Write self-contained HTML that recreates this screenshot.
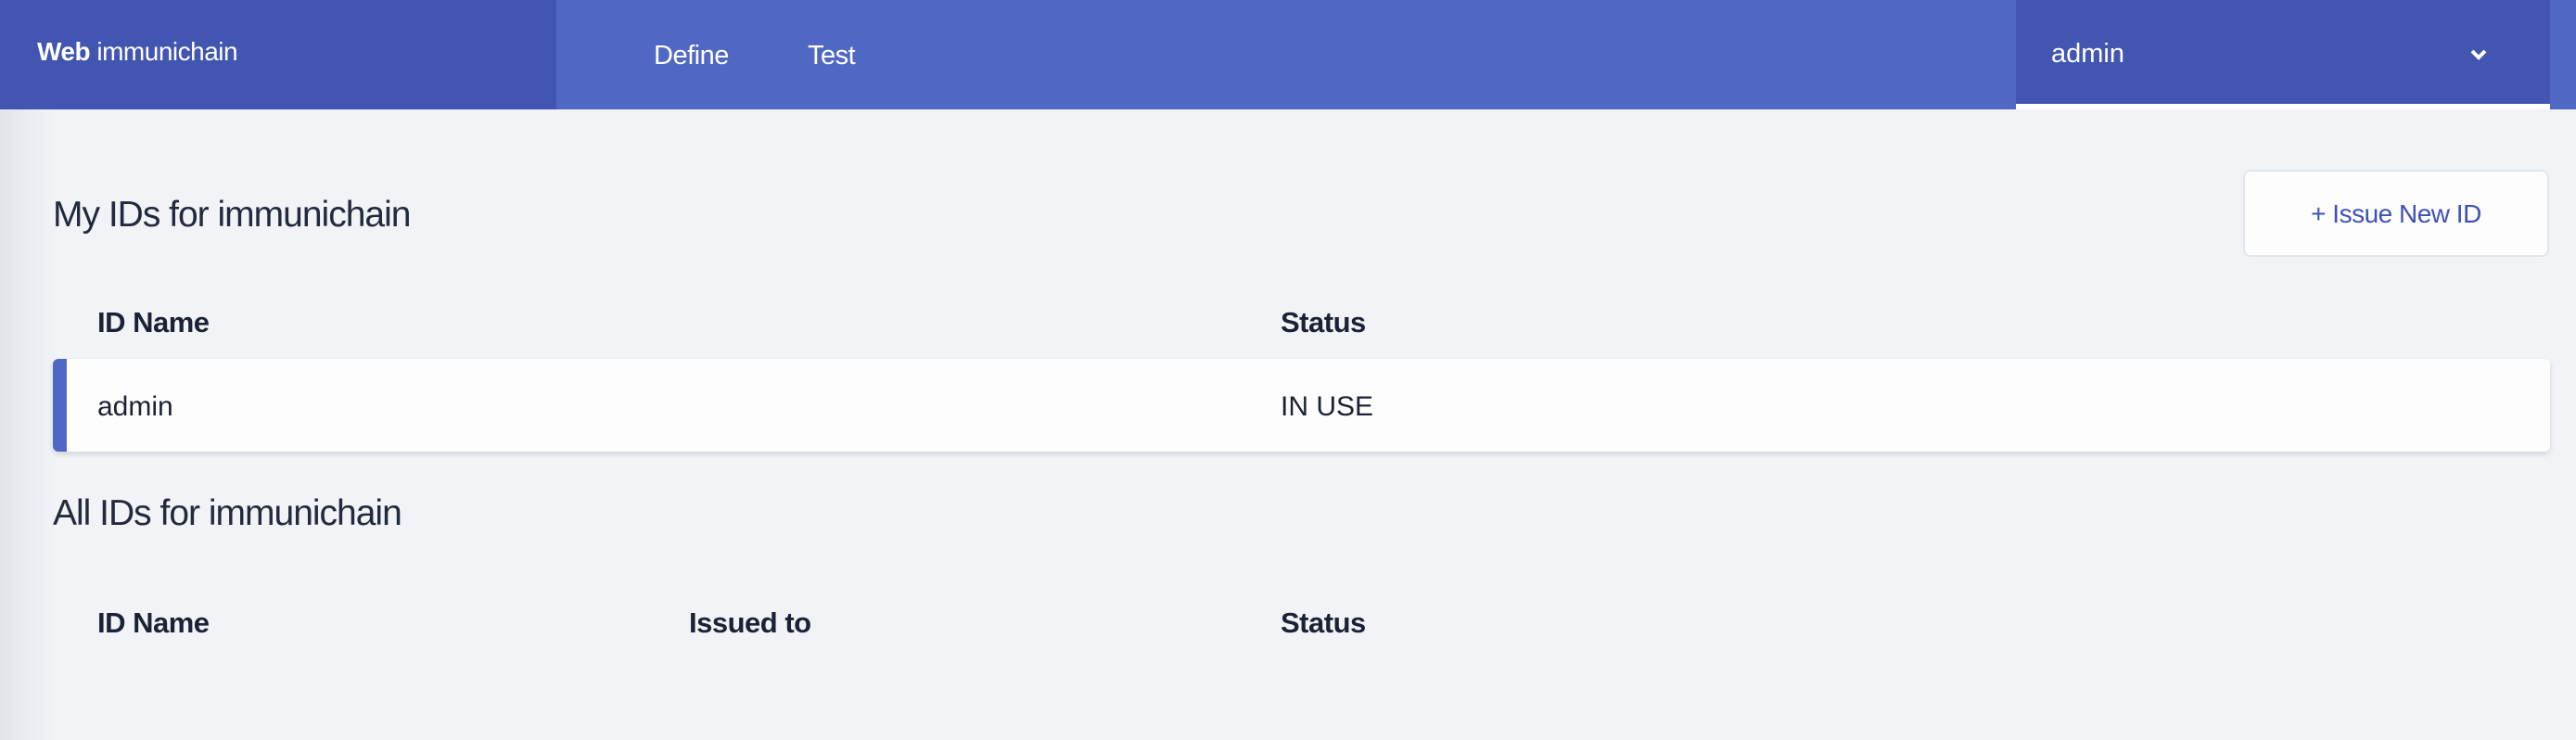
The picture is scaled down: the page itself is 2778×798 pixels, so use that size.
<!DOCTYPE html>
<html><head><meta charset="utf-8"><style>
*{margin:0;padding:0;box-sizing:border-box}
body{width:2778px;height:798px;overflow:hidden;background:#f2f3f7;font-family:"Liberation Sans",sans-serif;color:#1b2236;position:relative}
.shade{position:absolute;left:0;top:118px;width:60px;height:680px;background:linear-gradient(90deg,#e4e5ea,#f2f3f7)}
.hdr{position:absolute;left:0;top:0;width:2778px;height:118px;background:#5068c4}
.brand{position:absolute;left:0;top:0;width:600px;height:118px;background:#4155b1;color:#fff;font-size:28px;padding:40px 0 0 40px;letter-spacing:-0.5px}
.nav{position:absolute;top:44px;color:#fff;font-size:29px;letter-spacing:-0.5px}
.dd{position:absolute;left:2174px;top:0;width:576px;height:118px;background:#4155b1;border-bottom:6px solid #fff}
.dd span{position:absolute;left:38px;top:42px;color:#fff;font-size:29px}
.dd svg{position:absolute;left:490px;top:52px}
h2{position:absolute;font-weight:300;font-size:39px;letter-spacing:-1px;left:57px;color:#222a3d}
.th{position:absolute;font-weight:bold;font-size:31px;letter-spacing:-0.5px}
.btn{position:absolute;left:2419px;top:183px;width:330px;height:94px;background:#fdfdfd;border:2px solid #e2e7ea;border-radius:8px;color:#3f51b5;font-size:28px;text-align:center;line-height:92px;letter-spacing:-0.5px}
.row{position:absolute;left:57px;top:387px;width:2693px;height:100px;background:#fdfdfd;border-radius:6px;box-shadow:0 3px 6px rgba(0,0,0,.12);border-left:15px solid #5068c4}
.row span{position:absolute;top:35px;font-size:30px}
</style></head><body>
<div class="hdr"></div>
<div class="brand"><b>Web</b> immunichain</div>
<div class="nav" style="left:705px">Define</div>
<div class="nav" style="left:871px">Test</div>
<div class="dd"><span>admin</span><svg width="18" height="14" viewBox="0 0 18 14"><path d="M2 3 L9 10 L16 3" stroke="#fff" stroke-width="4" fill="none"/></svg></div>
<div class="shade"></div>
<h2 style="top:210px">My IDs for immunichain</h2>
<div class="btn">+ Issue New ID</div>
<div class="th" style="left:105px;top:330px">ID Name</div>
<div class="th" style="left:1381px;top:330px">Status</div>
<div class="row"><span style="left:33px">admin</span><span style="left:1309px">IN USE</span></div>
<h2 style="top:532px">All IDs for immunichain</h2>
<div class="th" style="left:105px;top:654px">ID Name</div>
<div class="th" style="left:743px;top:654px">Issued to</div>
<div class="th" style="left:1381px;top:654px">Status</div>
</body></html>
